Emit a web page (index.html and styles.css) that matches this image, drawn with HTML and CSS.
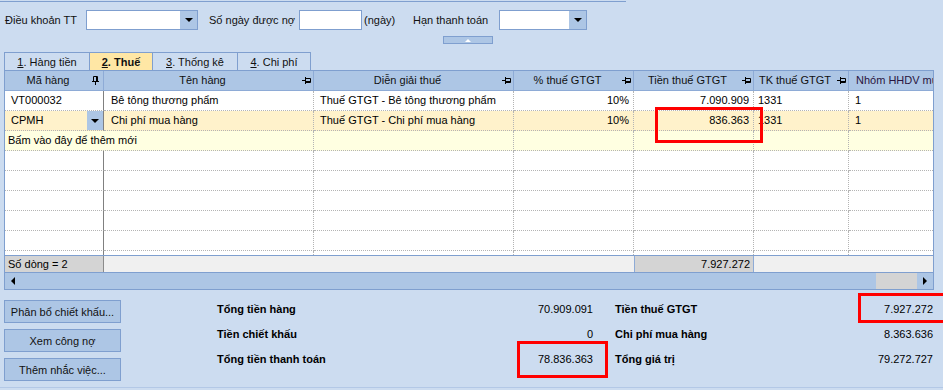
FILE: index.html
```html
<!DOCTYPE html>
<html lang="vi">
<head>
<meta charset="utf-8">
<title>Chứng từ mua hàng - Thuế</title>
<link rel="stylesheet" href="styles.css">
</head>
<body>
<div class="top-line"></div>

<div class="filter-bar">
  <label class="lbl lbl-dk">Điều khoản TT</label>
  <div class="combo combo-dk"><span class="combo-btn"><i class="tri-down"></i></span></div>
  <label class="lbl lbl-songay">Số ngày được nợ</label>
  <div class="input input-songay"></div>
  <span class="lbl lbl-ngay">(ngày)</span>
  <label class="lbl lbl-han">Hạn thanh toán</label>
  <div class="combo combo-han"><span class="combo-btn"><i class="tri-down"></i></span></div>
</div>
<div class="collapse"><i class="tri-up"></i></div>

<div class="tabs">
  <div class="tab tab-1"><u>1</u>. Hàng tiền</div>
  <div class="tab tab-2 active"><u>2</u>. Thuế</div>
  <div class="tab tab-3"><u>3</u>. Thống kê</div>
  <div class="tab tab-4"><u>4</u>. Chi phí</div>
</div>

<div class="grid">
  <div class="g-row g-head">
    <div class="hc">Mã hàng<svg class="pin pin-v" width="7" height="9" viewBox="0 0 7 9"><path d="M1.5 0.5H5.5V5.5H1.5Z M4.5 0.5V5.5 M0 5.5H7 M3.5 5.5V9" fill="none" stroke="#000"/></svg></div>
    <div class="hc">Tên hàng<svg class="pin" width="9" height="7" viewBox="0 0 9 7"><path d="M0 3.5H3 M3.5 0V7 M3.5 1.5H8.5V5.5H3.5 M4 4.5H8" fill="none" stroke="#000"/></svg></div>
    <div class="hc">Diễn giải thuế<svg class="pin" width="9" height="7" viewBox="0 0 9 7"><path d="M0 3.5H3 M3.5 0V7 M3.5 1.5H8.5V5.5H3.5 M4 4.5H8" fill="none" stroke="#000"/></svg></div>
    <div class="hc">% thuế GTGT<svg class="pin" width="9" height="7" viewBox="0 0 9 7"><path d="M0 3.5H3 M3.5 0V7 M3.5 1.5H8.5V5.5H3.5 M4 4.5H8" fill="none" stroke="#000"/></svg></div>
    <div class="hc">Tiền thuế GTGT<svg class="pin" width="9" height="7" viewBox="0 0 9 7"><path d="M0 3.5H3 M3.5 0V7 M3.5 1.5H8.5V5.5H3.5 M4 4.5H8" fill="none" stroke="#000"/></svg></div>
    <div class="hc">TK thuế GTGT<svg class="pin" width="9" height="7" viewBox="0 0 9 7"><path d="M0 3.5H3 M3.5 0V7 M3.5 1.5H8.5V5.5H3.5 M4 4.5H8" fill="none" stroke="#000"/></svg></div>
    <div class="hc hc-last">Nhóm HHDV mua vào</div>
  </div>

  <div class="g-body">
    <div class="g-row">
      <div class="c">VT000032</div>
      <div class="c">Bê tông thương phẩm</div>
      <div class="c">Thuế GTGT - Bê tông thương phẩm</div>
      <div class="c num">10%</div>
      <div class="c num">7.090.909</div>
      <div class="c">1331</div>
      <div class="c">1</div>
    </div>
    <div class="g-row row-sel">
      <div class="c c-combo">CPMH<span class="cell-btn"><i class="tri-down"></i></span></div>
      <div class="c">Chi phí mua hàng</div>
      <div class="c">Thuế GTGT - Chi phí mua hàng</div>
      <div class="c num">10%</div>
      <div class="c num">836.363</div>
      <div class="c">1331</div>
      <div class="c">1</div>
    </div>
    <div class="g-row row-new">
      <div class="c span-2">Bấm vào đây để thêm mới</div>
      <div class="c"></div><div class="c"></div><div class="c"></div><div class="c"></div><div class="c"></div>
    </div>
    <div class="g-row"><div class="c"></div><div class="c"></div><div class="c"></div><div class="c"></div><div class="c"></div><div class="c"></div><div class="c"></div></div>
    <div class="g-row"><div class="c"></div><div class="c"></div><div class="c"></div><div class="c"></div><div class="c"></div><div class="c"></div><div class="c"></div></div>
    <div class="g-row"><div class="c"></div><div class="c"></div><div class="c"></div><div class="c"></div><div class="c"></div><div class="c"></div><div class="c"></div></div>
    <div class="g-row"><div class="c"></div><div class="c"></div><div class="c"></div><div class="c"></div><div class="c"></div><div class="c"></div><div class="c"></div></div>
    <div class="g-row"><div class="c"></div><div class="c"></div><div class="c"></div><div class="c"></div><div class="c"></div><div class="c"></div><div class="c"></div></div>
    <div class="g-row"><div class="c"></div><div class="c"></div><div class="c"></div><div class="c"></div><div class="c"></div><div class="c"></div><div class="c"></div></div>
  </div>

  <div class="g-row g-foot">
    <div class="f f-count">Số dòng = 2</div>
    <div class="f"></div>
    <div class="f"></div>
    <div class="f"></div>
    <div class="f f-sum">7.927.272</div>
    <div class="f"></div>
    <div class="f"></div>
  </div>

  <div class="hscroll">
    <i class="tri-left"></i>
    <span class="hs-track"></span>
    <span class="hs-thumb"></span>
    <span class="hs-end"><i class="tri-right"></i></span>
  </div>
</div>

<div class="bottom">
  <div class="actions">
    <button class="btn">Phân bổ chiết khấu...</button>
    <button class="btn">Xem công nợ</button>
    <button class="btn">Thêm nhắc việc...</button>
  </div>
  <div class="summary">
    <div class="sum"><b>Tổng tiền hàng</b><span>70.909.091</span></div>
    <div class="sum"><b>Tiền thuế GTGT</b><span>7.927.272</span></div>
    <div class="sum"><b>Tiền chiết khấu</b><span>0</span></div>
    <div class="sum"><b>Chi phí mua hàng</b><span>8.363.636</span></div>
    <div class="sum"><b>Tổng tiền thanh toán</b><span>78.836.363</span></div>
    <div class="sum"><b>Tổng giá trị</b><span>79.272.727</span></div>
  </div>
</div>

<div class="mark mark-cell"></div>
<div class="mark mark-total"></div>
<div class="mark mark-tax"></div>
</body>
</html>
```

FILE: styles.css
```css
* {
    box-sizing: border-box;
}

html, body {
    margin: 0;
    padding: 0;
}

body {
    position: relative;
    width: 943px;
    height: 390px;
    overflow: hidden;
    background: #ccdcf0;
    color: #000;
    font-family: "Liberation Sans", Arial, sans-serif;
    font-size: 11px;
}

.top-line {
    margin-top: 1px;
    width: 626px;
    height: 1px;
    background: #7f9fcf;
}

/* filter row */
.filter-bar {
    display: flex;
    align-items: center;
    height: 20px;
    margin-top: 8px;
    padding-left: 5px;
}

.lbl {
    white-space: nowrap;
    color: #111;
}
.lbl-dk { width: 81px; }
.lbl-songay { width: 90px; margin-left: 11px; }
.lbl-ngay { width: 49px; margin-left: 2px; }
.lbl-han { width: 86px; }

.combo, .input {
    display: flex;
    justify-content: flex-end;
    height: 20px;
    background: #fff;
    border: 1px solid #7f9fcf;
}
.combo-dk { width: 112px; }
.combo-han { width: 88px; }
.input-songay { width: 63px; }

.combo-btn {
    display: flex;
    align-items: center;
    justify-content: center;
    width: 17px;
    background: #adc6e5;
}

.tri-down {
    width: 0;
    height: 0;
    border-left: 4px solid transparent;
    border-right: 4px solid transparent;
    border-top: 4px solid #000;
}

.tri-up {
    width: 0;
    height: 0;
    border-left: 3px solid transparent;
    border-right: 3px solid transparent;
    border-bottom: 3px solid #fff;
}

.tri-left {
    width: 0;
    height: 0;
    border-top: 4px solid transparent;
    border-bottom: 4px solid transparent;
    border-right: 4px solid #000;
}

.tri-right {
    width: 0;
    height: 0;
    border-top: 4px solid transparent;
    border-bottom: 4px solid transparent;
    border-left: 4px solid #000;
}

.collapse {
    display: flex;
    align-items: center;
    justify-content: center;
    width: 50px;
    height: 8px;
    margin: 6px 0 0 443px;
    background: #adc6e5;
    border: 1px solid #7f9fcf;
}

/* tabs */
.tabs {
    display: flex;
    height: 18px;
    margin: 8px 0 0 4px;
}

.tab {
    display: flex;
    align-items: center;
    justify-content: center;
    height: 18px;
    border: 1px solid #7f9fcf;
    border-bottom: none;
    margin-left: -1px;
    background: #ccdcf0;
    color: #111;
}
.tab-1 { width: 86px; margin-left: 0; }
.tab-2 { width: 64px; }
.tab-3 { width: 86px; }
.tab-4 { width: 74px; }

.tab.active {
    background: #ffe7a5;
    font-weight: bold;
}

/* grid */
.grid {
    width: 930px;
    margin-left: 4px;
    border: 1px solid #7f9fcf;
    background: #fff;
}

.g-row {
    display: grid;
    grid-template-columns: 99px 210px 200px 120px 120px 95px 84px;
}

.g-head {
    height: 20px;
    background: #adc6e5;
    border-bottom: 1px solid #8eabd6;
}

.hc {
    position: relative;
    padding-right: 12px;
    line-height: 19px;
    text-align: center;
    white-space: nowrap;
    color: #111;
    border-right: 1px solid #8eabd6;
}

.hc-last {
    overflow: hidden;
    padding: 0 0 0 7px;
    text-align: left;
    border-right: none;
    color: #2a1540;
}

.pin {
    position: absolute;
    right: 2px;
    top: 6px;
}
.pin-v {
    right: 4px;
    top: 5px;
}

.g-body {
    height: 164px;
    overflow: hidden;
}

.c {
    position: relative;
    height: 20px;
    padding: 0 4px 0 6px;
    line-height: 19px;
    white-space: nowrap;
    overflow: hidden;
    border-right: 1px dotted #b4b4b4;
    border-bottom: 1px dotted #b4b4b4;
}
.c:first-child {
    border-right: 1px solid #808080;
}
.c:last-child {
    border-right: none;
}
.c:nth-child(2) { padding-left: 7px; }
.c:nth-child(3) { padding-left: 6px; }
.c:nth-child(6) { padding-left: 4px; }
.c:nth-child(7) { padding-left: 6px; }

.num {
    text-align: right;
}

.row-sel .c {
    background: #fff2cb;
}

.c-combo {
    padding-left: 6px;
}

.cell-btn {
    position: absolute;
    top: 0;
    right: 0;
    bottom: 0;
    width: 16px;
    display: flex;
    align-items: center;
    justify-content: center;
    background: #adc6e5;
}

.row-new .c {
    background: #ffffe1;
}
.row-new .span-2 {
    grid-column: span 2;
    padding-left: 3px;
    border-right: 1px dotted #b4b4b4;
}

.g-foot {
    height: 17px;
    background: #f0f0f0;
    border-top: 1px solid #7f9fcf;
}

.f {
    line-height: 16px;
    white-space: nowrap;
}
.f-count {
    padding-left: 3px;
    background: #d4d4d4;
    border-right: 1px solid #8b8b8b;
}
.f-sum {
    padding-right: 3px;
    text-align: right;
    background: #d4d4d4;
    border-left: 1px solid #8eabd6;
    border-right: 1px solid #8eabd6;
}

.hscroll {
    display: flex;
    align-items: center;
    height: 17px;
    background: #adc6e5;
    border-top: 1px solid #7f9fcf;
}
.hscroll .tri-left {
    margin-left: 6px;
}
.hs-track {
    flex: 1;
}
.hs-thumb {
    width: 41px;
    height: 16px;
    background: #d4d4d4;
}
.hs-end {
    display: flex;
    align-items: center;
    justify-content: center;
    width: 16px;
    height: 16px;
}

/* totals */
.bottom {
    display: flex;
    align-items: flex-start;
    height: 98px;
    padding: 6px 0 0 4px;
    border-bottom: 1px solid #b3c8e6;
}

.actions {
    display: flex;
    flex-direction: column;
    gap: 6px;
    margin-top: 4px;
}

.btn {
    width: 117px;
    height: 23px;
    padding: 0;
    background: #adc6e5;
    border: 1px solid #7f9fcf;
    font-family: inherit;
    font-size: 11px;
    color: #111;
}

.summary {
    display: grid;
    grid-template-columns: 376px 318px;
    grid-auto-rows: 25px;
    column-gap: 22px;
    margin-left: 96px;
}

.sum {
    display: flex;
    align-items: center;
    justify-content: space-between;
    white-space: nowrap;
}

/* red highlight boxes */
.mark {
    position: absolute;
    border: 3px solid #ff0000;
}
.mark-cell {
    left: 655px;
    top: 107px;
    width: 108px;
    height: 36px;
}
.mark-total {
    left: 517px;
    top: 341px;
    width: 91px;
    height: 37px;
}
.mark-tax {
    left: 858px;
    top: 293px;
    width: 100px;
    height: 30px;
}
```
